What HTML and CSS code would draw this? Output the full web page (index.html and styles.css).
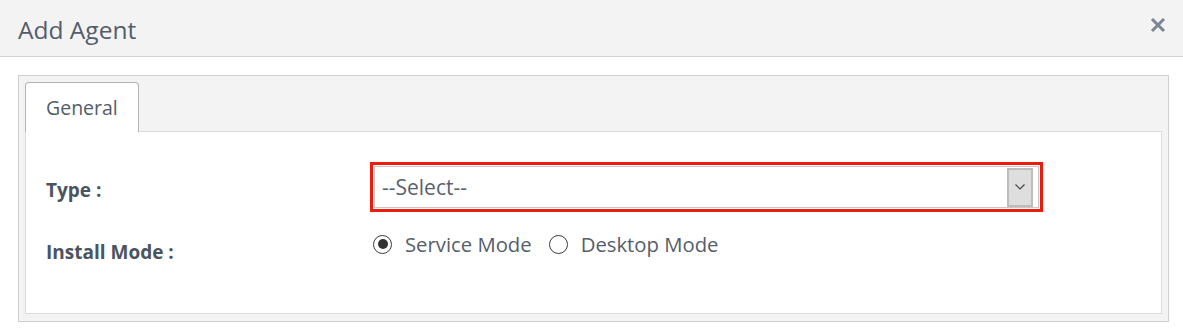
FILE: index.html
```html
<!DOCTYPE html>
<html lang="en">
<head>
  <meta charset="utf-8"/>
  <title>Add Agent</title>
  <link rel="stylesheet" href="styles.css">
</head>
<body>
  <div class="modal-header">
    <div class="modal-title">Add Agent</div>
    <button class="close-btn" aria-label="Close">
      <svg width="16" height="16" viewBox="0 0 16 16"><path d="M2 2 L14 14 M14 2 L2 14" stroke="#7b8592" stroke-width="3" stroke-linecap="butt"/></svg>
    </button>
  </div>

  <div class="modal-body">
    <div class="tab-panel">
      <div class="tabs">
        <div class="tab active">General</div>
      </div>
      <div class="tab-content">
        <div class="form-row">
          <label class="form-label">Type :</label>
          <div class="highlight">
            <div class="select-box">
              <span class="select-text">--Select--</span>
              <span class="select-arrow">
                <svg width="10" height="6" viewBox="0 0 10 6"><path d="M0.5 0.5 L5 5 L9.5 0.5" fill="none" stroke="#444" stroke-width="1.2"/></svg>
              </span>
            </div>
          </div>
        </div>
        <div class="form-row mode-row">
          <label class="form-label">Install Mode :</label>
          <div class="radio-group">
            <label class="radio"><span class="radio-dot checked"></span>Service Mode</label>
            <label class="radio"><span class="radio-dot"></span>Desktop Mode</label>
          </div>
        </div>
      </div>
    </div>
  </div>
</body>
</html>
```

FILE: styles.css
```css
body { margin:0; background:#fff; font-family:"Open Sans", "Noto Sans", sans-serif; color:#535c69; }

.modal-header { height:56px; background:#f3f3f3; border-bottom:1px solid #d2d2d2; display:flex; align-items:center; justify-content:space-between; padding:0 17px 0 18px; }
.modal-title { font-size:24.5px; color:#535d6b; margin-top:2px; }
.close-btn { background:none; border:none; padding:0; margin-top:-6px; cursor:pointer; display:flex; }

.modal-body { padding:18px 14px 0 18px; }
.tab-panel { background:#f3f3f3; border:1px solid #cfcfcf; padding:6px 6px 7px 6px; }
.tabs { display:flex; }
.tab { background:#fff; border:1px solid #b3b3b3; border-bottom:none; border-radius:4px 4px 0 0; padding:11px 20px; line-height:27px; font-size:19.5px; color:#535d6b; margin-bottom:-1px; position:relative; }
.tab-content { background:#fff; border:1px solid #dcdcdc; height:183px; padding:0 20px; box-sizing:border-box; }

.form-row { display:grid; grid-template-columns:324px 673px; }
.form-row:first-child { margin-top:30px; }
.form-label { font-weight:bold; font-size:19px; color:#4b5361; align-self:center; padding-top:6px; }

.highlight { border:3px solid #ec1c0c; padding:1px; }
.select-box { height:40px; border:1px solid #c8c8c8; display:flex; align-items:center; justify-content:space-between; padding:0 5px 0 7px; }
.select-text { font-size:21px; color:#58616e; }
.select-arrow { width:22px; height:35px; background:#dedede; border:2px solid #bdbdbd; display:flex; align-items:center; justify-content:center; }

.mode-row { margin-top:11px; }
.mode-row .form-label { padding-top:16px; }
.radio-group { display:flex; align-items:center; gap:17px; padding-left:3px; }
.radio { display:flex; align-items:center; gap:13px; font-size:20.3px; color:#555e6b; }
.radio-dot { width:19px; height:19px; border:1.5px solid #3a3a3a; border-radius:50%; box-sizing:border-box; display:flex; align-items:center; justify-content:center; background:#fff; }
.radio-dot.checked::after { content:""; width:10px; height:10px; border-radius:50%; background:#333; }
```
